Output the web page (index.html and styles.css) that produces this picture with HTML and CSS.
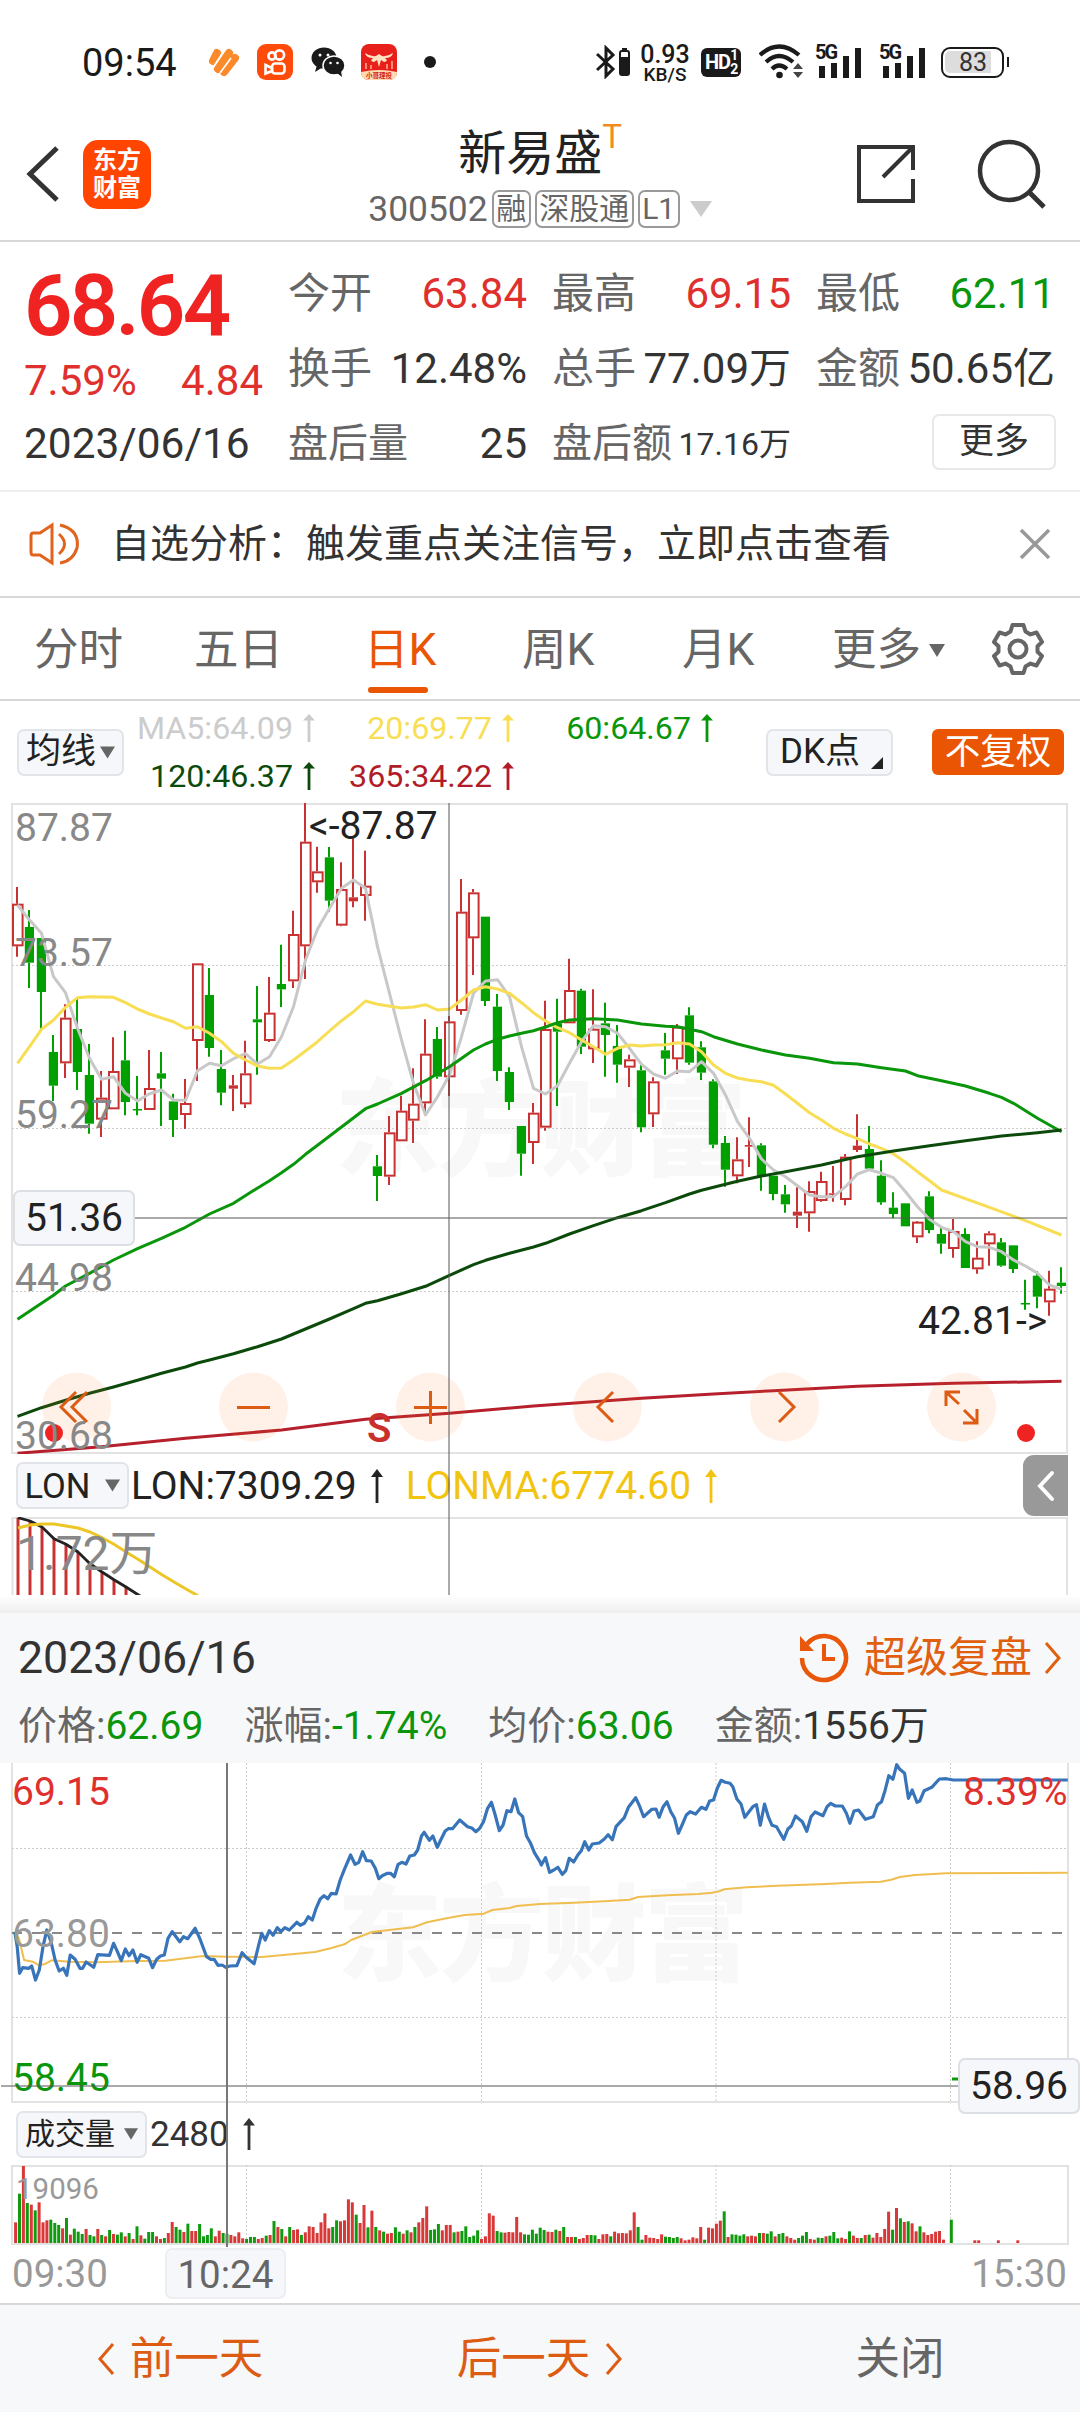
FILE: index.html
```html
<!DOCTYPE html>
<html lang="zh-CN">
<head>
<meta charset="utf-8">
<title>新易盛 300502</title>
<link rel="stylesheet" href="styles.css">
</head>
<body>
<svg class="defs" width="0" height="0">
  <symbol id="up" viewBox="0 0 12 30" preserveAspectRatio="none"><path d="M6 0 L12 7 H7.4 V30 H4.6 V7 H0 Z" fill="currentColor"/></symbol>
  <symbol id="down" viewBox="0 0 16 13"><path d="M0 0 H16 L8 13 Z" fill="currentColor"/></symbol>
  <symbol id="left" viewBox="0 0 18 32"><path d="M16 1 L3 16 L16 31" fill="none" stroke="currentColor" stroke-width="3"/></symbol>
  <symbol id="right" viewBox="0 0 18 32"><path d="M2 1 L15 16 L2 31" fill="none" stroke="currentColor" stroke-width="3"/></symbol>
  <symbol id="signal" viewBox="0 0 48 34"><path d="M4 21h6v12H4zM16 18h6v15h-6zM28 11h6v22h-6zM40 3h6v30h-6z" fill="#1a1a1a"/></symbol>
</svg>

<div class="status">
  <span class="time">09:54</span>
  <svg class="ic-heart" width="34" height="30" viewBox="0 0 34 30"><path d="M6 14 L10 6 M11 22 L22 6 M17 25 L28 11" stroke="#fb8a2b" stroke-width="8" stroke-linecap="round" fill="none"/><path d="M7 19 L17 4 M13 26 L24 11" stroke="#fff" stroke-width="1.600" fill="none"/></svg>
  <svg class="ic-kuai" width="36" height="36" viewBox="0 0 36 36"><rect width="36" height="36" rx="9" fill="#ff4b0a"/><g fill="none" stroke="#fff" stroke-width="2.600"><circle cx="15" cy="12" r="3.600"/><circle cx="22.500" cy="11" r="4.600"/><rect x="15" y="19.500" width="12.500" height="10" rx="3"/><path d="M8.500 21 L15 24 V27 L8.500 29.500 Z"/></g></svg>
  <svg class="ic-wechat" width="34" height="30" viewBox="0 0 34 30"><ellipse cx="13" cy="11" rx="12.500" ry="10.500" fill="#1a1a1a"/><path d="M6 18 L4 25 L12 20Z" fill="#1a1a1a"/><ellipse cx="23" cy="18.500" rx="11" ry="9.500" fill="#1a1a1a" stroke="#fff" stroke-width="1.500"/><path d="M26 26 L31 30 L30 24Z" fill="#1a1a1a"/><g fill="#fff"><circle cx="9" cy="8" r="1.500"/><circle cx="17" cy="8" r="1.500"/><circle cx="19.500" cy="16" r="1.300"/><circle cx="26.500" cy="16" r="1.300"/></g></svg>
  <svg class="ic-bull" width="36" height="36" viewBox="0 0 36 36"><rect width="36" height="36" rx="8" fill="#e8201c"/><path d="M0 28 Q18 24 36 28 Q36 36 28 36 H8 Q0 36 0 28Z" fill="#ffd9b0"/><path d="M4 9 Q10 13 15 12 L18 10 L21 12 Q26 13 32 9 Q31 14 24 14 Q28 17 23 18 L20 16 L18 23 L16 16 L13 18 Q8 17 12 14 Q5 14 4 9Z" fill="#ffe3c2"/><path d="M5 25V19M10 25V21M26 25V20M31 25V17" stroke="#ff8a70" stroke-width="2"/><text x="18" y="33.500" class="bull-text">小哥理投</text></svg>
  <i class="dot"></i>
  <svg class="ic-bt" width="34" height="34" viewBox="0 0 34 34"><path d="M1 9 L17 24 L10 31 V3 L17 10 L1 25" fill="none" stroke="#1a1a1a" stroke-width="3"/><rect x="24" y="6" width="9" height="24" rx="2" fill="none" stroke="#1a1a1a" stroke-width="2"/><path d="M24 12h9v18h-9zM26 3h5v3h-5z" fill="#1a1a1a"/></svg>
  <span class="speed"><b>0.93</b><b class="unit">KB/S</b></span>
  <span class="hd">HD<span><i>1</i><i>2</i></span></span>
  <svg class="ic-wifi" width="46" height="36" viewBox="0 0 46 36"><g fill="none" stroke="#1a1a1a" stroke-width="4.200"><path d="M1 11 Q20 -6 40 11"/><path d="M7 18 Q20 6 34 18"/><path d="M13 25 Q20 18 28 25"/></g><circle cx="20.500" cy="31" r="3.300" fill="#1a1a1a"/><path d="M34 25 L39 19 L44 25ZM34 28 L39 34 L44 28Z" fill="#444"/></svg>
  <span class="sig"><em>5G</em><svg width="48" height="34"><use href="#signal"/></svg></span>
  <span class="sig"><em>5G</em><svg width="48" height="34"><use href="#signal"/></svg></span>
  <span class="battery"><i>83</i></span>
</div>

<header class="nav">
  <div class="nav-left">
    <svg width="34" height="56" viewBox="0 0 34 56"><path d="M31 2 L4 28 L31 54" fill="none" stroke="#333" stroke-width="5"/></svg>
    <span class="logo">东方<br>财富</span>
  </div>
  <div class="nav-mid">
    <div class="name">新易盛<sup>T</sup></div>
    <div class="code">300502<i>融</i><i>深股通</i><i>L1</i><svg width="22" height="16" viewBox="0 0 16 13" preserveAspectRatio="none"><use href="#down"/></svg></div>
  </div>
  <div class="nav-right">
    <svg width="60" height="60" viewBox="0 0 60 60"><path d="M34 3 H3 V57 H57 V35 M57 26 V3 H34 M57 3 L27 33" fill="none" stroke="#333" stroke-width="4"/></svg>
    <svg width="70" height="72" viewBox="0 0 70 72"><circle cx="32" cy="33" r="29" fill="none" stroke="#333" stroke-width="4.500"/><path d="M52 54 L67 69" stroke="#333" stroke-width="5"/></svg>
  </div>
</header>

<section class="quote">
  <div class="quote-main">
    <div class="price">68.64</div>
    <div class="change"><span>7.59%</span><span>4.84</span></div>
    <div class="date">2023/06/16</div>
  </div>
  <div class="stats">
    <div><label>今开</label><b class="red">63.84</b></div>
    <div><label>最高</label><b class="red">69.15</b></div>
    <div><label>最低</label><b class="green">62.11</b></div>
    <div><label>换手</label><b>12.48%</b></div>
    <div><label>总手</label><b>77.09万</b></div>
    <div><label>金额</label><b>50.65亿</b></div>
    <div><label class="after">盘后量</label><b>25</b></div>
    <div><label class="after">盘后额</label><b class="small">17.16万</b></div>
    <div class="more-cell"><button class="more">更多</button></div>
  </div>
</section>

<section class="notice">
  <svg width="52" height="44" viewBox="0 0 52 44"><g fill="none" stroke="#e0641e" stroke-width="3"><path d="M23 3 V41 L11 33 H4 Q2 33 2 30 V14 Q2 11 4 11 H11 Z"/><path d="M30 12 Q41 22 30 32"/><path d="M31 3 Q51 8 48 26 Q44 39 31 41"/></g></svg>
  <p>自选分析：触发重点关注信号，立即点击查看</p>
  <svg width="32" height="32" viewBox="0 0 32 32"><path d="M2 2 L30 30 M30 2 L2 30" stroke="#999" stroke-width="3.500"/></svg>
</section>

<nav class="tabs">
  <a>分时</a><a>五日</a><a class="on">日K</a><a>周K</a><a>月K</a><a>更多<svg width="16" height="13"><use href="#down"/></svg></a>
  <svg class="gear" width="54" height="54" viewBox="-27 -27 54 54"><path d="M-5.500 -24 H5.500 L7.500 -17.500 L12.500 -14.600 L18.500 -16.500 L24 -7 L19.500 -2.800 V2.800 L24 7 L18.500 16.500 L12.500 14.600 L7.500 17.500 L5.500 24 H-5.500 L-7.500 17.500 L-12.500 14.600 L-18.500 16.500 L-24 7 L-19.500 2.800 V-2.800 L-24 -7 L-18.500 -16.500 L-12.500 -14.600 L-7.500 -17.500 Z" fill="none" stroke="#666" stroke-width="4" stroke-linejoin="round"/><circle r="8.500" fill="none" stroke="#666" stroke-width="4"/></svg>
</nav>

<section class="ma-row">
  <button class="chip ma-chip">均线<svg width="15" height="13"><use href="#down"/></svg></button>
  <div class="ma">
    <span class="c5">MA5:64.09<svg width="12" height="28"><use href="#up"/></svg></span>
    <span class="c20">20:69.77<svg width="12" height="28"><use href="#up"/></svg></span>
    <span class="c60">60:64.67<svg width="12" height="28"><use href="#up"/></svg></span>
    <span class="c120">120:46.37<svg width="12" height="28"><use href="#up"/></svg></span>
    <span class="c365">365:34.22<svg width="12" height="28"><use href="#up"/></svg></span>
  </div>
  <button class="chip dk">DK点<svg width="12" height="12" viewBox="0 0 12 12"><path d="M12 0V12H0Z" fill="#222"/></svg></button>
  <button class="adjust">不复权</button>
</section>

<section class="kline">
  <svg class="k-chart" width="1080" height="651" viewBox="0 13 1080 651">
    <text class="mark" x="335" y="377" textLength="412">东方财富</text>
    <path d="M12 14 H1067 V663 H12 Z" fill="none" stroke="#e2e2e2" stroke-width="2"/>
    <path d="M12 175.500H1067M12 338.500H1067M12 501.500H1067" stroke="#ccc" stroke-dasharray="2 2"/>
    <g id="candles"></g>
    <g id="averages"></g>
    <g fill="#ff6a1a" fill-opacity=".1"><circle cx="76.500" cy="617" r="34.500"/><circle cx="253.500" cy="617" r="34.500"/><circle cx="430.500" cy="617" r="34.500"/><circle cx="607.500" cy="617" r="34.500"/><circle cx="784.500" cy="617" r="34.500"/><circle cx="961.500" cy="617" r="34.500"/></g>
    <circle cx="54" cy="643" r="9" fill="#f02323"/><circle cx="1026" cy="643" r="9" fill="#f02323"/>
    <path d="M135 428H1067" stroke="#555" stroke-opacity=".5" stroke-width="2"/>
    <g class="axis"><text x="15" y="51">87.87</text><text x="15" y="176">73.57</text><text x="15" y="338">59.27</text><text x="15" y="501">44.98</text><text x="15" y="659">30.68</text></g>
    <g class="peak"><text x="309" y="49">&lt;-87.87</text><text x="918" y="544">42.81-&gt;</text></g>
    <text class="sell" x="367" y="652">S</text>
    <g fill="none" stroke="#dc5c14" stroke-width="3"><path d="M76 602 L61 617 L76 632 M87 602 L72 617 L87 632"/><path d="M237 617.500H270"/><path d="M414 617.500H447M430.500 601V634"/><path d="M613 602 L598 617 L613 632"/><path d="M779 602 L794 617 L779 632"/><path d="M946 616 V602 H960 M947 603 L959 614 M977 619 V633 H963 M976 632 L964 620"/></g>
  </svg>
  <span class="tag tag-left">51.36</span>
  <div class="lon-row">
    <button class="chip lon-chip">LON<svg width="15" height="13"><use href="#down"/></svg></button>
    <span>LON:7309.29<svg width="12" height="34"><use href="#up"/></svg></span>
    <span class="lonma">LONMA:6774.60<svg width="12" height="34"><use href="#up"/></svg></span>
    <i class="fold"><svg width="18" height="32" viewBox="0 0 18 32"><path d="M15 3 L3 16 L15 29" fill="none" stroke="#fff" stroke-width="4" stroke-linecap="round"/></svg></i>
  </div>
  <svg class="lon-chart" width="1080" height="78" viewBox="0 0 1080 78">
    <path d="M12.500 78V1H1067V78" fill="none" stroke="#e2e2e2" stroke-width="2"/>
    <g id="lon"></g>
    <text class="lon-max" x="16" y="53">1.72万</text>
  </svg>
  <i class="cross"></i>
</section>
<div class="shade"></div>

<section class="sheet">
  <div class="sheet-top">
    <span class="day">2023/06/16</span>
    <svg width="50" height="50" viewBox="0 0 50 50"><path d="M3 25 A22 22 0 1 0 8 11" fill="none" stroke="#e8570a" stroke-width="4.500"/><path d="M1 3 V18 H15Z" fill="#e8570a"/><path d="M25 11 V26 H36" fill="none" stroke="#e8570a" stroke-width="4"/></svg>
    <span class="replay">超级复盘</span>
    <svg class="replay-go" width="18" height="32"><use href="#right"/></svg>
  </div>
  <div class="sheet-stats">
    <span>价格:<b class="green">62.69</b></span><span>涨幅:<b class="green">-1.74%</b></span><span>均价:<b class="green">63.06</b></span><span>金额:<b>1556万</b></span>
  </div>
</section>

<section class="minute">
  <svg class="m-chart" width="1080" height="340" viewBox="0 13 1080 340">
    <text class="mark" x="337" y="222" textLength="412">东方财富</text>
    <path d="M12 13V352H1068V13" fill="none" stroke="#e2e2e2" stroke-width="2"/>
    <path d="M12 98.500H1068M12 267.500H1068M246.500 13V352M481.500 13V352M716 13V352M950.500 13V352" stroke="#ccc" stroke-dasharray="2 2"/>
    <path d="M12 183H1067" stroke="#888" stroke-width="2" stroke-dasharray="10 10"/>
    <g id="minute"></g>
    <g class="axis"><text x="12" y="55" class="f-red">69.15</text><text x="963" y="55" class="f-red">8.39%</text><text x="12" y="341" class="f-green">58.45</text></g>
    <text class="axis f-gray" x="12" y="197">63.80</text>
    <path d="M952 329H960" stroke="#0a9a0a" stroke-width="3"/>
    <path d="M1 336H960" stroke="#555" stroke-opacity=".5" stroke-width="2"/>
  </svg>
  <span class="tag tag-right">58.96</span>
  <div class="vol-row">
    <button class="chip vol-chip">成交量<svg width="14" height="12"><use href="#down"/></svg></button>
    <span>2480<svg width="12" height="32"><use href="#up"/></svg></span>
  </div>
  <svg class="vol-chart" width="1080" height="80" viewBox="0 0 1080 80">
    <path d="M12 1H1068V79H12Z" fill="none" stroke="#e2e2e2" stroke-width="2"/>
    <path d="M246.500 0V79M481.500 0V79M716 0V79M950.500 0V79" stroke="#ccc" stroke-dasharray="2 2"/>
    <g id="volume"></g>
    <text class="vol-max" x="16" y="34">19096</text>
  </svg>
  <i class="cross"></i>
  <div class="times"><span>09:30</span><span class="now">10:24</span><span>15:30</span></div>
</section>

<footer class="pager">
  <a><svg width="18" height="32"><use href="#left"/></svg>前一天</a>
  <a>后一天<svg width="18" height="32"><use href="#right"/></svg></a>
  <a class="close">关闭</a>
</footer>
<script src="charts.js"></script>
</body>
</html>
```

FILE: styles.css
```css
* { box-sizing: border-box; }
body { margin: 0; width: 1080px; height: 2412px; overflow: hidden; background: #fff; color: #333; font-family: Roboto, "Noto Sans CJK SC", sans-serif; font-size: 42px; }
button { font: inherit; color: inherit; padding: 0; margin: 0; }
b, i, em { font-weight: 400; font-style: normal; }
svg { display: block; flex: none; }
.defs { position: absolute; }
.red { color: #e0302e; }
.green { color: #0a960a; }

.status { height: 124px; display: flex; align-items: center; padding-left: 82px; color: #1a1a1a; }
.time { font-size: 38px; width: 125px; padding-top: 1px; }
.ic-heart { margin-right: 16px; }
.ic-kuai { margin-right: 18px; }
.ic-wechat { margin-right: 16px; }
.bull-text { font-size: 6.5px; font-weight: 700; text-anchor: middle; fill: #d02018; }
.dot { width: 12px; height: 12px; border-radius: 50%; background: #1a1a1a; margin-left: 27px; }
.ic-bt { margin-left: 160px; }
.speed { width: 60px; margin-left: 5px; display: flex; flex-direction: column; align-items: center; font-size: 25px; line-height: 22px; padding-top: 3px; }
.speed b { font-weight: 500; white-space: nowrap; }
.speed .unit { font-size: 19px; line-height: 18px; }
.hd { width: 40px; height: 29px; margin-left: 6px; border-radius: 6px; background: #1a1a1a; color: #fff; font: 700 20px/29px Roboto, sans-serif; letter-spacing: -1px; display: flex; padding-left: 4px; }
.hd span { display: flex; flex-direction: column; font-size: 14px; }
.hd i { line-height: 14px; font-weight: 700; }
.ic-wifi { margin-left: 18px; }
.sig { position: relative; margin-left: 12px; width: 52px; }
.sig em { position: absolute; left: 0; top: -2px; font-size: 20px; font-weight: 700; line-height: 19px; background: #fff; letter-spacing: -2px; z-index: 1; }
.ic-wifi + .sig { margin-left: 10px; }
.battery { width: 63px; height: 31px; margin-left: 10px; border: 2.5px solid #1a1a1a; border-radius: 9px; padding: 2px; position: relative; }
.battery i { display: block; width: 46px; height: 22px; border-radius: 5px 0 0 5px; background: #ddd; font-size: 25px; line-height: 24px; text-align: right; padding-right: 4px; color: #333; }
.battery::after { content: ""; position: absolute; right: -7px; top: 8px; width: 2.5px; height: 10px; background: #1a1a1a; }

.nav { height: 118px; border-bottom: 2px solid #d8d8d8; display: flex; }
.nav > div { width: 360px; }
.nav-left { display: flex; align-items: center; padding: 0 0 16px 26px; }
.logo { width: 68px; height: 69px; margin-left: 23px; border-radius: 15px; background: #ff4500; color: #fff; font-size: 24px; line-height: 28px; font-weight: 700; text-align: center; padding-top: 6px; }
.nav-mid { display: flex; flex-direction: column; align-items: center; padding-top: 1px; }
.name { font-size: 48px; line-height: 58px; height: 64px; color: #222; white-space: nowrap; display: flex; }
.name sup { font-size: 33px; line-height: 24px; color: #f28a1e; }
.code { font-size: 35.4px; line-height: 40px; color: #666; display: flex; align-items: center; white-space: nowrap; }
.code i { height: 38px; border: 2px solid #999; border-radius: 7px; font-size: 30px; line-height: 33px; padding: 0 2.5px; margin-left: 4px; }
.code svg { margin-left: 10px; color: #ccc; }
.nav-right { display: flex; align-items: center; justify-content: flex-end; gap: 61px; padding: 0 33px 16px 0; }

.quote { height: 250px; border-bottom: 2px solid #eee; display: flex; padding: 14px 0 0 24px; }
.quote-main { width: 265px; }
.price { height: 99px; line-height: 101px; font-size: 85px; font-weight: 600; letter-spacing: -2.8px; color: #f02323; }
.change { height: 50px; line-height: 51px; color: #e0302e; display: flex; justify-content: space-between; padding-right: 26px; }
.date { height: 76px; line-height: 77px; font-size: 42.4px; }
.stats { display: grid; grid-template-columns: repeat(3, 238px); column-gap: 26px; grid-auto-rows: 75px; line-height: 76px; }
.stats div { display: flex; justify-content: space-between; white-space: nowrap; }
.stats label { color: #666; margin-left: -1px; }
.stats .after { font-size: 40px; }
.stats .small { font-size: 32px; }
.stats .more-cell { justify-content: flex-end; align-items: center; }
.more { width: 124px; height: 56px; font-size: 35px; line-height: 52px; border: 2px solid #e8e8e8; border-radius: 7px; background: #fff; margin: -4px -1px 0 0; }

.notice { height: 106px; border-bottom: 2px solid #d8d8d8; display: flex; align-items: center; padding: 0 29px; }
.notice p { margin: 0 auto 0 30px; font-size: 39px; line-height: 102px; color: #333; }

.tabs { position: relative; height: 103px; border-bottom: 2px solid #d8d8d8; padding-left: 34px; display: grid; grid-template-columns: 160px 170px 158px 160px 150px 159px auto; align-items: center; font-size: 44.5px; line-height: 104px; color: #666; }
.tabs a { display: flex; align-items: center; gap: 8px; position: relative; }
.tabs .on { color: #ea5504; }
.tabs .on::after { content: ""; position: absolute; left: 4px; bottom: 9px; width: 60px; height: 6px; border-radius: 3px; background: #ea5504; }
.gear { margin-top: -3px; }

.ma-row { height: 102px; display: flex; align-items: center; padding-left: 17px; }
.chip { height: 47px; border: 2px solid #e1e4e8; border-radius: 7px; background: #f6f7fa; color: #222; display: flex; align-items: center; justify-content: center; white-space: nowrap; line-height: 42px; }
.chip svg { color: #666; }
.ma-chip { width: 107px; font-size: 35px; gap: 4px; }
.ma { width: 642px; display: grid; grid-template-columns: 191px 199px 199px; grid-auto-rows: 48px; font-size: 32.2px; padding-bottom: 1px; }
.ma span { display: flex; justify-content: flex-end; align-items: center; gap: 10px; white-space: nowrap; }
.c5 { color: #ccc; } .c20 { color: #f7de55; } .c60 { color: #0a960a; } .c120 { color: #0c4a0c; } .c365 { color: #b01c28; }
.dk { width: 127px; font-size: 35px; gap: 11px; padding: 0 0 1px 4px; }
.dk svg { align-self: flex-end; margin-bottom: 4px; }
.adjust { width: 132px; height: 46px; margin-left: 39px; border: 0; border-radius: 6px; background: #ea5504; color: #fff; font-size: 35.5px; line-height: 45px; }

.kline, .minute { position: relative; }
.kline { height: 792px; }
.mark { font-size: 105px; font-weight: 900; fill: #f8f8f8; }
.axis, .peak { font-size: 39px; }
.axis { fill: #888; }
.peak { fill: #222; }
.f-red { fill: #e0302e; } .f-green { fill: #0a960a; } .f-gray { fill: #999; }
.sell { font-size: 40px; font-weight: 600; fill: #c9302c; }
.tag { position: absolute; width: 122px; height: 56px; border: 2px solid #dcdfe3; border-radius: 7px; background: #f6f7fa; color: #222; font-size: 39px; line-height: 53px; text-align: center; }
.tag-left { left: 13px; top: 387px; }
.tag-right { left: 958px; top: 295px; z-index: 2; }
.lon-row { height: 63px; display: flex; align-items: center; padding-left: 16px; font-size: 39px; color: #222; }
.lon-row span { display: flex; align-items: center; gap: 14px; margin-left: 2px; }
.lon-row .lonma { margin-left: 23px; color: #f2c40f; }
.lon-chip { width: 113px; font-size: 34.5px; gap: 15px; }
.fold { width: 45px; height: 61px; margin-left: auto; margin-right: 12px; border-radius: 11px 0 0 11px; background: #999; display: flex; align-items: center; justify-content: center; }
.lon-max { font-size: 48px; fill: #888; }
.cross { position: absolute; top: 0; width: 2px; background: rgba(85, 85, 85, .5); }
.kline .cross { left: 448px; height: 792px; }
.shade { height: 18px; background: linear-gradient(#fff, #efefef); }

.sheet { height: 150px; background: #f7f8fa; padding: 0 18px; }
.sheet-top { height: 90px; display: flex; align-items: center; }
.day { font-size: 44.7px; margin-right: auto; }
.replay { font-size: 42px; line-height: 86px; color: #e0600f; margin: -1px 12px 0 15px; }
.replay-go { color: #e0600f; }
.sheet-stats { display: flex; font-size: 39px; line-height: 47px; color: #666; white-space: nowrap; }
.sheet-stats span { margin-right: 41px; }
.sheet-stats b:not(.green) { color: #333; }

.minute { height: 540px; }
.vol-row { height: 62px; display: flex; align-items: center; padding-left: 16px; font-size: 35px; color: #333; }
.vol-row span { display: flex; align-items: center; gap: 14px; margin-left: 3px; }
.vol-chip { width: 131px; font-size: 30px; gap: 9px; }
.vol-max { font-size: 29.5px; fill: #999; }
.minute .cross { left: 226px; width: 1.5px; height: 484px; background: #777; }
.times { display: flex; align-items: center; height: 56px; padding: 0 13px 0 12px; font-size: 38.5px; color: #999; }
.times .now { width: 121px; height: 51px; margin: 0 auto 0 57px; border: 2px solid #eceef1; border-radius: 7px; background: #f6f7fa; color: #666; text-align: center; line-height: 49px; }

.pager { height: 109px; border-top: 2px solid #d8d8d8; background: #f7f8fa; display: flex; font-size: 44.5px; color: #dc5c14; }
.pager a { width: 360px; line-height: 112px; display: flex; align-items: center; justify-content: center; gap: 15px; }
.pager .close { color: #666; }
```

FILE: charts.js
```js
// Ordinates are kept at three units per pixel, sessions are 12px apart.
const NS = 'http://www.w3.org/2000/svg';
const RED = '#c83232', GREEN = '#00a000';
const add = (id, tag, attrs) => {
  const el = document.createElementNS(NS, tag);
  for (const k in attrs) el.setAttribute(k, attrs[k]);
  document.getElementById(id).appendChild(el);
};
const line = (id, pts, color, width) => add(id, 'polyline', {
  points: pts.map(p => p[0].toFixed(1) + ',' + p[1].toFixed(1)).join(' '),
  fill: 'none', stroke: color, 'stroke-width': width, 'stroke-linejoin': 'round'
});

// [colour, high, body top, body bottom, low]
const candles = `r 291 341 469 500,g 360 411 518 594,g 444 444 606 716,g 735 786 887 933,r 643 683 820 864,g 627 717 846 900,g 762 855 1001 1031,r 843 923 989 1041,r 742 843 958 958,g 722 811 936 976,g 858 957 960 976,r 780 894 960 960,g 786 850 866 1008,g 911 934 990 1041,r 867 939 975 1017,r 520 520 753 873,g 534 615 774 800,g 780 837 908 946,r 855 886 896 963,r 752 850 943 954,g 588 688 697 854,r 561 668 753 756,g 464 582 598 651,r 362 432 574 594,r 38 155 469 567,r 170 244 277 308,g 171 202 332 365,r 217 297 407 409,r 145 322 334 352,r 182 287 318 392,g 1095 1129 1158 1233,r 978 1027 1160 1185,r 917 962 1054 1054,r 835 941 992 1059,r 688 791 940 970,g 711 747 860 866,r 678 694 862 918,r 267 365 663 674,r 297 307 445 555,g 380 380 633 648,g 612 650 843 873,g 832 846 936 960,g 1008 1008 1091 1157,r 939 968 1059 1122,r 632 717 1013 1022,g 626 700 725 948,r 506 600 700 700,g 596 602 770 792,r 598 716 778 819,g 638 700 735 860,g 705 768 824 878,r 794 808 833 891,g 824 841 1012 1027,r 862 874 973 1011,g 729 781 806 854,r 702 710 808 852,g 652 676 818 824,g 754 772 848 870,g 868 874 1064 1075,g 1038 1059 1139 1190,r 1042 1108 1159 1180,r 982 1065 1070 1131,g 1060 1066 1160 1202,g 1157 1157 1212 1231,g 1185 1213 1243 1268,r 1192 1265 1277 1314,r 1174 1203 1270 1325,r 1145 1173 1233 1235,r 1128 1210 1213 1235,r 1092 1100 1230 1246,r 973 1067 1080 1086,g 1008 1077 1136 1136,g 1111 1157 1237 1244,g 1207 1253 1272 1285,g 1240 1240 1309 1309,r 1293 1295 1342 1359,g 1204 1219 1320 1330,g 1313 1332 1361 1391,r 1287 1323 1377 1403,g 1315 1332 1434 1434,r 1354 1403 1438 1451,r 1324 1330 1363 1427,g 1344 1357 1427 1430,g 1366 1366 1437 1449,g 1469 1539 1541 1559,g 1444 1457 1520 1555,r 1442 1496 1537 1577,g 1432 1478 1488 1511`;
candles.split(',').forEach((row, i) => {
  const [c, ...v] = row.split(' ');
  const [hi, top, bot, lo] = v.map(n => n / 3);
  const x = 17 + 12 * i, color = c === 'r' ? RED : GREEN;
  const body = Math.max(bot - top, 1.5);
  add('candles', 'path', { d: `M${x} ${hi}V${top}M${x} ${bot}V${lo}`, stroke: color, 'stroke-width': 2 });
  if (c === 'g' || body < 5) add('candles', 'rect', { x: x - 4.2, y: top, width: 9.2, height: body, fill: color });
  else add('candles', 'rect', { x: x - 4, y: top + 1, width: 9.6, height: body - 2, fill: '#fff', stroke: color, 'stroke-width': 2 });
});

// Sparse [session, ordinate] pairs
const average = (s, color) => {
  const pts = s.split(' ').map(p => p.split(',').map(Number)).map(([i, y]) => [17.5 + 12 * i, y / 3]);
  line('averages', pts, color, 3);
};
const ma5 = [345,390,430,560,608,715,805,868,860,910,933,911,900,930,931,842,820,827,806,791,822,800,740,650,510,418,355,295,270,295,470,610,750,880,975,920,855,740,610,573,569,620,770,895,912,887,820,755,707,710,730,775,823,852,865,843,845,815,850,915,995,1045,1107,1140,1160,1187,1215,1220,1220,1190,1152,1139,1150,1163,1205,1250,1288,1312,1325,1355,1370,1372,1385,1410,1428,1450,1485,1498];
average(ma5.map((y, i) => i + ',' + y).join(' '), '#c8c8c8');
average('0,820 1,770 2,718 3,690 4,652 5,623 6,620 8,622 9,638 10,657 11,672 12,684 13,695 14,715 15,710 16,730 17,755 18,790 19,810 20,828 21,835 22,834 23,810 24,783 25,755 26,723 27,692 28,665 29,633 30,643 32,654 33,651 34,644 35,660 36,657 37,630 38,600 39,590 40,597 41,610 42,638 43,668 44,693 45,713 46,728 47,750 48,770 49,793 50,775 51,765 52,768 53,765 54,764 55,758 56,762 57,785 58,825 59,850 60,864 61,871 62,875 63,886 64,912 65,940 66,968 67,990 68,1015 69,1032 70,1046 71,1062 72,1075 73,1092 74,1117 75,1145 76,1172 77,1200 81,1252 84,1292 87,1335', '#f7de55');
average('0,1588 2,1540 3,1516 4,1488 6,1450 8,1410 10,1376 12,1345 14,1312 16,1272 18,1240 19.5,1205 21,1172 22,1148 23,1123 24,1093 25,1066 27,1011 29,956 30,942 32,910 34,872 36,830 38,780 39,762 40,748 41,738 42,730 43,722 44,711 45,698 46,690 48,686 50,690 52,702 54,709 55,710 56,718 57,725 58,740 60,762 62,780 64,795 66,805 68,818 70,822 72,833 74,843 75,857 77,872 79,888 81,910 82,922 83,940 84,962 85,985 86,1005 87,1025', '#0a960a');
average('0,1879 2,1853 4,1831 6,1810 8,1791 10,1771 12,1750 14,1731 15,1719 16,1710 18,1691 20,1670 22,1647 24,1617 26,1587 28,1556 29,1540 30,1532 32,1511 34,1489 36,1456 38,1424 39,1411 41,1390 43,1371 44,1360 46,1332 48,1307 50,1283 52,1262 54,1238 56,1212 57,1201 58,1192 60,1174 62,1158 64,1145 67,1125 70,1100 73,1083 76,1067 79,1052 82,1038 85,1028 87,1020', '#0c4a0c');
average('0,1990 7,1970 14,1945 22,1920 29,1888 36,1870 43,1848 52,1825 58,1812 63,1802 70,1789 78,1780 87,1774', '#b5202c');

const lon = [2, 12, 30, 65, 82, 105, 140, 165, 188, 210, 236].map((y, i) => [18 + 12 * i, y / 3]);
lon.slice(0, 10).forEach(([x, y]) => add('lon', 'path', { d: `M${x} ${y}V78`, stroke: RED, 'stroke-width': 3 }));
line('lon', [...lon.slice(0, 10), [140, 79]], '#222', 2.8);
line('lon', [[0,33],[1,24],[2,21],[3,21],[5,33],[6,45],[7,62],[8,82],[9,105],[10,127],[12,173],[13,195],[14,216],[15,236]].map(([i, y]) => [18 + 12 * i, y / 3]), '#ecc626', 3);

const trace = s => s.split(' ').map(p => p.split(',').map(Number)).map(([x, y]) => [x / 2.904, y / 3]);
line('minute', trace('43,545 55,565 70,630 95,635 114,646 130,642 150,631 200,635 280,637 400,633 480,632 520,627 590,618 660,620 760,621 800,617 915,606 960,595 1000,583 1020,570 1080,546 1200,532 1240,517 1300,504 1350,495 1405,491 1430,480 1480,474 1500,468 1568,462 1668,458 1768,453 1828,449 1853,441 1938,436 2028,432 2068,428 2088,424 2103,418 2168,412 2258,407 2398,402 2468,398 2558,395 2588,389 2613,381 2658,375 2748,370 3101,368'), '#f0be50', 2);
line('minute', trace('43,545 50,590 57,670 66,653 84,655 92,648 103,690 114,660 125,590 136,540 148,575 160,630 172,663 184,655 194,676 204,615 218,628 232,655 240,655 250,636 272,652 284,614 318,616 330,580 341,605 352,632 364,597 375,617 386,600 398,637 409,614 432,625 443,653 455,628 466,618 477,615 488,565 500,545 522,575 533,560 545,566 567,535 580,565 600,620 612,628 622,628 633,646 645,645 656,652 668,648 688,647 703,608 715,622 738,641 750,590 760,550 770,570 782,542 793,556 805,533 816,545 827,533 840,540 862,517 872,526 884,520 895,500 907,510 918,475 930,447 941,437 952,446 962,430 976,432 988,390 1000,358 1018,315 1031,343 1042,337 1053,305 1064,332 1078,333 1090,355 1100,386 1110,377 1125,370 1134,370 1145,380 1156,343 1167,337 1179,342 1190,318 1203,315 1213,300 1224,258 1232,247 1247,271 1257,258 1270,292 1281,268 1293,243 1302,236 1314,236 1335,210 1358,230 1370,234 1382,245 1393,235 1404,215 1416,175 1427,157 1438,195 1450,242 1461,225 1472,182 1484,185 1495,147 1506,188 1518,200 1529,258 1540,278 1552,308 1568,335 1572,345 1584,323 1596,367 1608,360 1620,352 1633,373 1643,362 1653,325 1666,336 1678,315 1688,302 1698,275 1710,300 1720,282 1740,279 1755,267 1766,254 1778,269 1789,230 1813,203 1825,172 1846,143 1858,170 1869,200 1893,178 1905,177 1914,202 1926,170 1937,155 1948,185 1959,205 1970,250 1982,222 1993,195 2004,185 2020,192 2037,172 2050,178 2061,153 2072,150 2083,115 2094,91 2106,97 2120,100 2128,110 2140,147 2152,162 2163,202 2174,187 2186,170 2197,164 2208,226 2220,162 2231,200 2242,226 2255,230 2276,268 2288,237 2298,228 2310,198 2330,215 2343,244 2355,200 2367,186 2390,197 2402,170 2412,160 2426,168 2446,168 2458,190 2468,220 2480,183 2493,180 2513,208 2536,200 2548,165 2560,155 2570,122 2581,77 2593,88 2604,44 2613,58 2627,70 2638,145 2649,120 2663,157 2671,153 2684,122 2706,112 2728,87 2748,86 2768,90 3101,90'), '#3774b9', 3.2);

// One bar per minute; negative values are falling minutes
const volume = [62,-148,231,-120,115,-98,122,62,68,-70,-60,-54,44,-75,25,-43,-34,-27,42,-24,-20,42,-24,20,-39,27,-25,-32,20,-30,12,-50,23,-13,-33,-33,20,12,-15,30,63,-48,-40,33,-58,36,36,-57,-20,-24,-44,20,37,-30,-28,24,20,32,14,-12,-18,-18,12,15,-22,24,-66,48,-42,20,-48,39,41,-24,32,50,48,30,62,89,44,-48,-68,65,68,131,122,-85,60,114,-47,97,-48,38,-34,28,30,-47,-34,28,-38,32,-48,62,75,110,-39,-41,-57,38,54,54,-32,34,-36,-50,-18,-22,-38,12,20,89,82,-36,-32,31,33,32,78,32,-26,-25,-40,-28,-46,-39,34,33,-40,36,-48,18,18,-18,12,15,24,-24,-23,12,26,27,-20,34,29,30,29,38,92,-48,-10,24,16,15,12,26,-19,-18,-15,-18,14,8,10,17,14,48,-10,46,44,58,67,-95,18,-26,-25,-22,-26,20,22,20,-30,30,-28,-35,20,-27,-30,20,15,10,-15,-22,-33,12,10,-16,-15,20,-22,-33,-14,16,12,-35,22,15,-15,24,-25,16,30,18,42,94,-40,105,-74,63,-65,59,35,-50,32,24,27,34,36,10,0,-70,0,0,0,0,0,8,8,0,0,0,0,8,0,0,0,0,8];
volume.forEach((v, i) => {
  if (v) add('volume', 'rect', { x: (14.1 + 3.915 * i).toFixed(1), y: 78 - Math.abs(v) / 3, width: 3, height: Math.abs(v) / 3, fill: v > 0 ? '#d83838' : '#109a10' });
});
```
